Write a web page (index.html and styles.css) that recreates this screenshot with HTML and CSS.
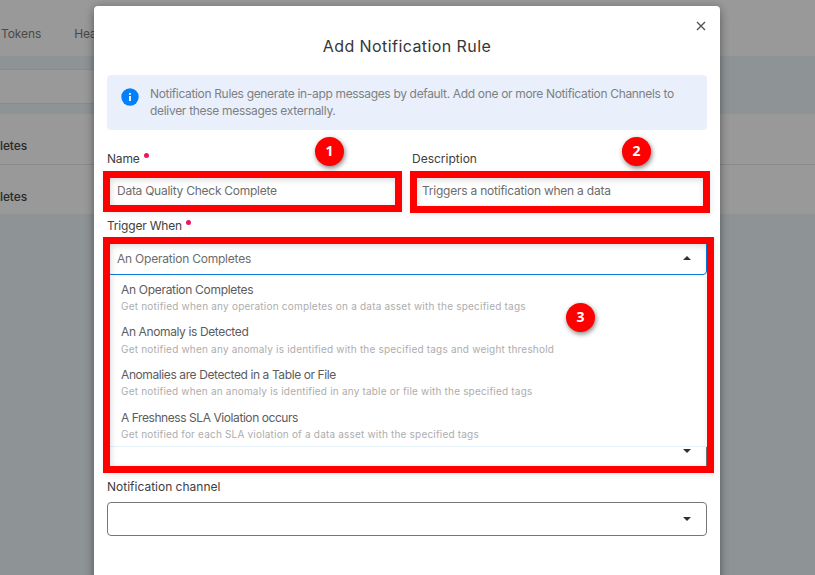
FILE: index.html
```html
<!DOCTYPE html>
<html lang="en">
<head>
<meta charset="utf-8">
<title>Add Notification Rule</title>
<link rel="stylesheet" href="styles.css">
</head>
<body>
<div class="page">
  <nav class="tabs"><span class="tab">Tokens</span><span class="tab">Health</span></nav>
  <div class="search"></div>
  <div class="row"><span>letes</span></div>
  <div class="row"><span>letes</span></div>
</div>
<div class="backdrop">
  <section class="modal">
    <header class="head">
      <svg class="close" viewBox="0 0 10 10"><path d="M1 1l8 8M9 1l-8 8"/></svg>
      <h1>Add Notification Rule</h1>
    </header>
    <div class="info">
      <svg class="info-icon" viewBox="0 0 18 18"><circle cx="9" cy="9" r="8.7" fill="#0080fa"/><path d="M8 5h2v1.8H8zM8 8h2v5H8z" fill="#e9f0fc"/></svg>
      <p><span class="info-a">Notification Rules generate in-app messages by default. Add one or more Notification Channels to</span><br><span class="info-b">deliver these messages externally.</span></p>
    </div>
    <div class="pair">
      <div class="field">
        <label><span class="l-name">Name</span><i class="dot"></i></label>
        <div class="input marked mark-name"><span class="v-name">Data Quality Check Complete</span></div>
      </div>
      <div class="field">
        <label><span class="l-desc">Description</span></label>
        <div class="input marked mark-desc"><span class="v-desc">Triggers a notification when a data</span></div>
      </div>
    </div>
    <label class="trigger-label"><span class="l-trigger">Trigger When</span><i class="dot"></i></label>
    <div class="trigger marked mark-trigger">
      <div class="select open"><span class="v-op">An Operation Completes</span><svg class="caret" viewBox="0 0 8 4"><path d="M0 4h8L4 0z"/></svg></div>
      <ul class="menu">
        <li><b class="o1">An Operation Completes</b><small class="s1">Get notified when any operation completes on a data asset with the specified tags</small></li>
        <li><b class="o2">An Anomaly is Detected</b><small class="s2">Get notified when any anomaly is identified with the specified tags and weight threshold</small></li>
        <li><b class="o3">Anomalies are Detected in a Table or File</b><small class="s3">Get notified when an anomaly is identified in any table or file with the specified tags</small></li>
        <li><b class="o4">A Freshness SLA Violation occurs</b><small class="s4">Get notified for each SLA violation of a data asset with the specified tags</small></li>
      </ul>
      <div class="covered"><svg class="caret" viewBox="0 0 8 4"><path d="M0 0h8L4 4z"/></svg></div>
    </div>
    <label class="channel-label"><span class="l-channel">Notification channel</span></label>
    <div class="select channel"><svg class="caret" viewBox="0 0 8 4"><path d="M0 0h8L4 4z"/></svg></div>
  </section>
</div>
<span class="badge b1">1</span>
<span class="badge b2">2</span>
<span class="badge b3">3</span>
</body>
</html>
```
FILE: styles.css
```css
*, *::after { box-sizing: border-box; }
body { margin: 0; width: 815px; height: 575px; overflow: hidden; font-family: Inter, sans-serif; font-size: 12px; color: #6c6c6c; }
.page { height: 575px; background: #8e9396; }
.tabs { height: 56px; background: #999; display: flex; align-items: center; gap: 33px; padding: 11px 0 0 1px; color: #484848; font-size: 12px; letter-spacing: -.1px; }
.search { width: 400px; height: 35px; margin: 13px 0 10px; background: #999; border: solid #898c8f; border-width: 1px 0; }
.row { height: 50px; background: #999; display: flex; align-items: center; padding-top: 13px; color: #292929; font-weight: 500; letter-spacing: -.1px; }
.row + .row { border-top: 1px solid #87898b; padding-top: 14px; }
.backdrop { position: absolute; inset: 0; overflow: hidden; padding: 6px 95px 0 94px; }
.modal { height: 600px; background: #fff; border-radius: 4px; padding: 0 13px; box-shadow: 0 6px 10px rgba(0,0,0,.25), 0 0 8px rgba(0,0,0,.22); }
.head { height: 69px; display: flex; flex-direction: column; padding-top: 15px; }
.close { width: 10px; height: 10px; align-self: flex-end; margin-right: 1px; stroke: #505050; stroke-width: 1.3; fill: none; }
h1 { margin: 5px 0 0; text-align: center; font-size: 16px; line-height: 20px; font-weight: 400; letter-spacing: .42px; color: #363636; white-space: nowrap; }
.info { height: 55px; border-radius: 4px; background: #e9f0fc; display: flex; padding: 10px 14px; gap: 11px; color: #7d7f84; }
.info-icon { flex: none; width: 18px; height: 18px; margin-top: 3px; }
.info p { margin: 0; line-height: 17px; white-space: nowrap; }
.info-a { letter-spacing: -.337px; }
.info-b { letter-spacing: -.3px; }
.pair { display: grid; grid-template-columns: 295px 295px; gap: 10px; margin-top: 19px; }
label { display: flex; height: 18px; align-items: center; gap: 4px; color: #404040; white-space: nowrap; }
.l-name, .l-trigger { letter-spacing: -.2px; }
.l-channel { letter-spacing: 0; }
.dot { width: 5px; height: 5px; border-radius: 50%; background: #ec165c; margin-bottom: 5px; }
.input { height: 34px; margin-top: 6px; display: flex; align-items: center; padding: 0 10px; white-space: nowrap; }
.v-name { letter-spacing: -.26px; }
.v-desc { letter-spacing: -.23px; }
.v-op { letter-spacing: -.22px; }
.marked { position: relative; }
.marked::after { content: ""; position: absolute; border: 7px solid #f00; box-shadow: inset 1px 2px 6px rgba(0,0,0,.14), 1px 2px 6px rgba(0,0,0,.08); pointer-events: none; }
.mark-name::after { left: -4px; top: -2px; width: 299px; height: 41px; }
.mark-desc::after { left: -2px; top: -2px; width: 300px; height: 42px; }
.mark-trigger::after { left: -4px; top: -4px; width: 611px; height: 236px; }
.trigger-label { margin-top: 9px; }
.trigger { height: 230px; margin-top: 7px; }
.select { height: 34px; border: 1px solid #777; border-radius: 4px; display: flex; align-items: center; justify-content: space-between; padding: 0 15px 0 9px; }
.open { border-color: #0878dd; }
.caret { width: 8px; height: 4px; fill: #303030; margin-left: auto; }
.menu { margin: 0; padding: 6px 14px 0; height: 172px; list-style: none; border-bottom: 1px solid #e5f0f7; white-space: nowrap; }
.menu li { display: flow-root; height: 42.6px; }
.menu b { display: block; font-weight: 400; line-height: 18px; color: #5c5c5c; }
.menu small { display: block; font-size: 10px; line-height: 15px; color: #adadad; }
.o1 { letter-spacing: -.3px; }
.menu .o2 { letter-spacing: -.38px; margin-top: -1px; padding-bottom: 1px; }
.o3 { letter-spacing: -.4px; }
.o4 { letter-spacing: -.43px; }
.s1 { letter-spacing: .21px; }
.s2 { letter-spacing: .2px; }
.s3, .s4 { letter-spacing: .19px; }
.covered { height: 20px; border-right: 1px solid #777; padding: 2px 15px 0; display: flex; align-items: flex-start; }
.channel-label { margin-top: 6px; }
.channel { margin-top: 7px; }
.badge { position: absolute; width: 29px; height: 29px; border-radius: 50%; background: #f00; color: #fff; font: bold 14px/27px "Open Sans", sans-serif; text-align: center; box-shadow: 1px 2px 5px rgba(0,0,0,.5); }
.b1 { left: 315px; top: 137px; }
.b2 { left: 622px; top: 137px; }
.b3 { left: 566px; top: 303px; }
```
